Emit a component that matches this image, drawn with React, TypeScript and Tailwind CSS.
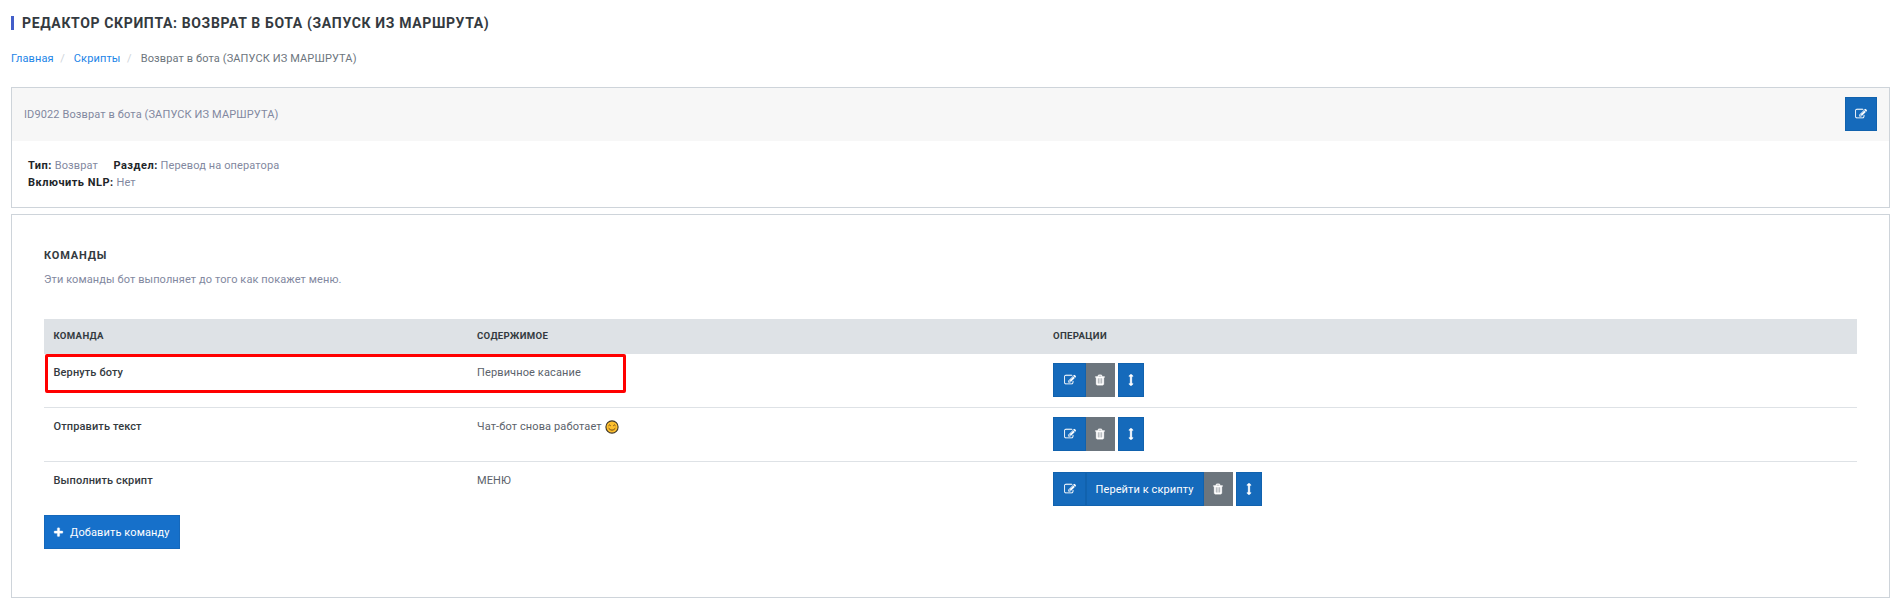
import type { ReactNode } from "react";

const PATHS = {
  edit: "M888 1184l116-116-152-152-116 116v56h96v96h56zm440-720q-16-16-33 1l-350 350q-17 17-1 33t33-1l350-350q17-17 1-33zm80 594v190q0 119-84.5 203.5t-203.5 84.5h-832q-119 0-203.5-84.5t-84.5-203.5v-832q0-119 84.5-203.5t203.5-84.5h832q63 0 117 25 15 7 18 23 3 17-9 29l-49 49q-14 14-32 8-23-6-45-6h-832q-66 0-113 47t-47 113v832q0 66 47 113t113 47h832q66 0 113-47t47-113v-126q0-13 9-22l64-64q15-15 35-7t20 29zm-96-738l288 288-672 672h-288v-288zm444 132l-92 92-288-288 92-92q28-28 68-28t68 28l152 152q28 28 28 68t-28 68z",
  trash: "M704 1376v-704q0-14-9-23t-23-9h-64q-14 0-23 9t-9 23v704q0 14 9 23t23 9h64q14 0 23-9t9-23zm256 0v-704q0-14-9-23t-23-9h-64q-14 0-23 9t-9 23v704q0 14 9 23t23 9h64q14 0 23-9t9-23zm256 0v-704q0-14-9-23t-23-9h-64q-14 0-23 9t-9 23v704q0 14 9 23t23 9h64q14 0 23-9t9-23zm-544-992h448l-48-117q-7-9-17-11h-317q-10 2-17 11zm928 32v64q0 14-9 23t-23 9h-96v948q0 83-47 143.5t-113 60.5h-832q-66 0-113-58.5t-47-141.5v-952h-96q-14 0-23-9t-9-23v-64q0-14 9-23t23-9h309l70-167q15-37 54-63t79-26h320q40 0 79 26t54 63l70 167h309q14 0 23 9t9 23z",
  plus: "M1600 736v192q0 40-28 68t-68 28h-416v416q0 40-28 68t-68 28h-192q-40 0-68-28t-28-68v-416h-416q-40 0-68-28t-28-68v-192q0-40 28-68t68-28h416v-416q0-40 28-68t68-28h192q40 0 68 28t28 68v416h416q40 0 68 28t28 68z",
  move: "M1216 320q0 26-19 45t-45 19h-128v1024h128q26 0 45 19t19 45-19 45l-256 256q-19 19-45 19t-45-19l-256-256q-19-19-19-45t19-45 45-19h128v-1024h-128q-26 0-45-19t-19-45 19-45l256-256q19-19 45-19t45 19l256 256q19 19 19 45z",
};

function Icon({ name, className = "size-3" }: { name: keyof typeof PATHS; className?: string }) {
  return (
    <svg viewBox="0 0 1792 1792" className={`${className} shrink-0 fill-current`} aria-hidden="true">
      <path d={PATHS[name]} stroke="currentColor" strokeWidth={name === "edit" ? 20 : 50} />
    </svg>
  );
}

function Smile() {
  return (
    <svg viewBox="0 0 14 14" className="ml-[3px] size-3.5" aria-hidden="true">
      <circle cx="7" cy="7" r="6.1" fill="#fdbf2d" stroke="#3f3626" strokeWidth="1.1" />
      <path d="M3.5 5.8q1.1-1.7 2.2 0M8.3 5.8q1.1-1.7 2.2 0M3.6 8.2q3.4 4 6.8 0" fill="none" stroke="#5d3a12" strokeWidth="0.9" />
    </svg>
  );
}

const blue = "flex h-[34px] items-center justify-center border border-[#1162ae] bg-[#156abb] text-white";

function Operations({ link }: { link?: string }) {
  return (
    <div className="flex">
      <button className={`${blue} w-[33px]`}><Icon name="edit" /></button>
      {link && <button className={`${blue} w-[118px] pr-px tracking-[0.1px]`}>{link}</button>}
      <button className="mr-[3px] flex h-[34px] w-[29px] items-center justify-center bg-[#6c757d] pr-px text-white">
        <Icon name="trash" />
      </button>
      <button className={`${blue} w-[26px]`}><Icon name="move" /></button>
    </div>
  );
}

const rows: { name: string; content: ReactNode; link?: string; className: string }[] = [
  { name: "Вернуть боту", content: "Первичное касание", className: "h-[53px]" },
  { name: "Отправить текст", content: <>Чат-бот снова работает<Smile /></>, className: "h-[54px] border-t border-[#dee2e6]" },
  { name: "Выполнить скрипт", content: "МЕНЮ", link: "Перейти к скрипту", className: "h-[54px] border-t border-[#dee2e6]" },
];

const grid = "grid grid-cols-[423.5px_576px_1fr] pl-[9.5px]";

function Label({ children }: { children: ReactNode }) {
  return <b className="tracking-[0.5px] text-[#212529]">{children}</b>;
}

export default function App() {
  return (
    <div className="h-[606px] overflow-hidden bg-white pr-[3px] pl-[11px] font-[Roboto,sans-serif] text-[11px] leading-[17px] tracking-[0.12px] text-[#8288a0]">
      <h1 className="flex h-[46px] items-center text-[14px] font-bold tracking-[0.64px] text-[#343a40]">
        <span className="mr-2 h-3.5 w-[3px] bg-[#435ec9]" />
        РЕДАКТОР СКРИПТА: ВОЗВРАТ В БОТА (ЗАПУСК ИЗ МАРШРУТА)
      </h1>
      <nav className="flex h-[41px] pt-[3.5px] text-[#6c757d]">
        <a className="text-[#1b84e7]">Главная</a>
        <span className="mr-[9px] ml-[6.5px] text-[#ced4da]">/</span>
        <a className="text-[#1b84e7]">Скрипты</a>
        <span className="mr-[9px] ml-[6.5px] text-[#ced4da]">/</span>
        <span>Возврат в бота (ЗАПУСК ИЗ МАРШРУТА)</span>
      </nav>

      <section className="h-[121px] border border-[#ced4da]">
        <header className="flex h-[53px] items-center justify-between bg-[#f7f7f7] pr-3 pl-3">
          <span>ID9022 Возврат в бота (ЗАПУСК ИЗ МАРШРУТА)</span>
          <button className={`${blue} mt-[-1px] w-8`}><Icon name="edit" /></button>
        </header>
        <div className="px-4 pt-4">
          <div>
            <span className="mr-[15.5px]"><Label>Тип:</Label> Возврат</span>
            <span><Label>Раздел:</Label> Перевод на оператора</span>
          </div>
          <div><Label>Включить NLP:</Label> Нет</div>
        </div>
      </section>

      <section className="mt-1.5 h-[384px] border border-[#ced4da] px-8 pt-8">
        <h2 className="font-bold tracking-[0.85px] text-[#343a40]">КОМАНДЫ</h2>
        <p className="mt-[7px] mb-[31px] tracking-[0.1px]">Эти команды бот выполняет до того как покажет меню.</p>
        <div className={`${grid} h-[35px] items-center bg-[#dee2e6] pb-0.5 text-[9.6px] font-bold tracking-[0.32px] text-[#343a40]`}>
          <span>КОМАНДА</span>
          <span>СОДЕРЖИМОЕ</span>
          <span>ОПЕРАЦИИ</span>
        </div>
        <div className="relative">
          {rows.map((row) => (
            <div key={row.name} className={`${grid} ${row.className}`}>
              <span className="mt-2.5 h-[17px] font-medium text-[#343a40]">{row.name}</span>
              <span className="mt-2.5 flex h-[17px] items-center text-[#5b626b]">{row.content}</span>
              <div className={row.link ? "mt-2.5" : "mt-[9px]"}>
                <Operations link={row.link} />
              </div>
            </div>
          ))}
          <div className="pointer-events-none absolute top-0 left-px h-[39px] w-[581px] rounded-xs border-[3px] border-[#ff0000]" />
        </div>
        <button className="flex h-[34px] w-[136px] items-center border border-[#1568bb] bg-[#1670ca] pl-2 text-white">
          <Icon name="plus" className="mr-1.5 size-[11px]" />
          Добавить команду
        </button>
      </section>
    </div>
  );
}
